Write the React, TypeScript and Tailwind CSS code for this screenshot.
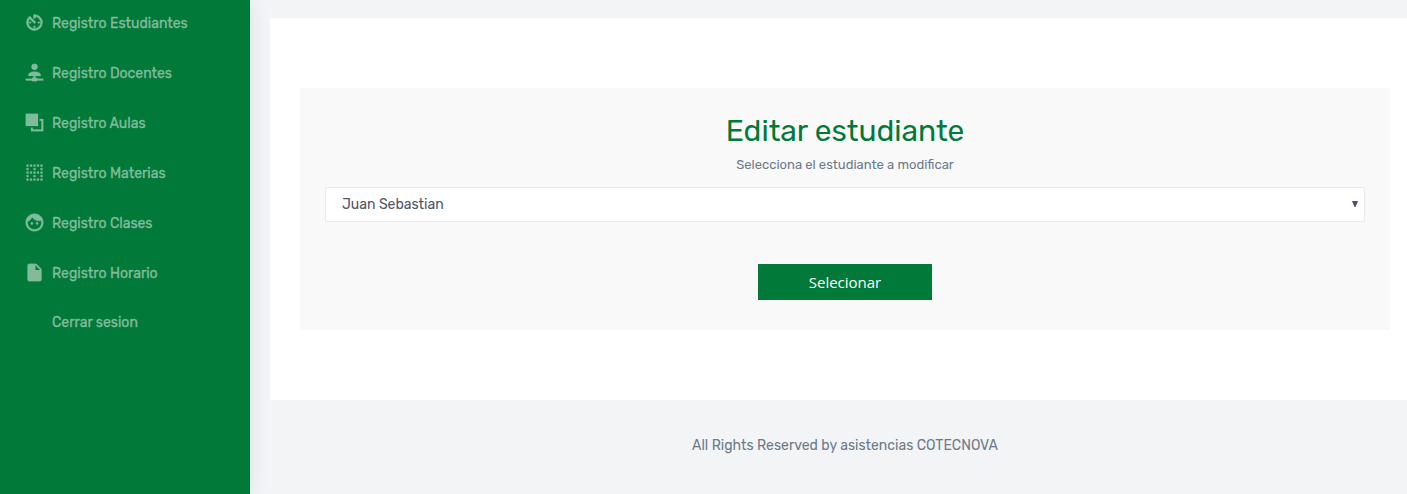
import React from "react";
import { MdAvTimer, MdFace, MdBorderClear } from "react-icons/md";

function PathIcon({ d }: { d: string }) {
  return (
    <svg viewBox="0 0 24 24" className="size-[21px]" fill="currentColor" stroke="currentColor" strokeWidth="0.3">
      <path d={d} />
    </svg>
  );
}

const network =
  "M13,16V18H14A1,1 0 0,1 15,19H22V21H15A1,1 0 0,1 14,22H10A1,1 0 0,1 9,21H2V19H9A1,1 0 0,1 10,18H11V16H5V14.5C5,12.57 8.13,11 12,11C15.87,11 19,12.57 19,14.5V16H13M12,2A3.5,3.5 0 0,1 15.5,5.5A3.5,3.5 0 0,1 12,9A3.5,3.5 0 0,1 8.5,5.5A3.5,3.5 0 0,1 12,2Z";
const forward = "M2,2H16V16H2V2M22,8V22H8V18H10V20H20V10H18V8H22Z";
const file =
  "M13,9V3.5L18.5,9M6,2C4.89,2 4,2.89 4,4V20A2,2 0 0,0 6,22H18A2,2 0 0,0 20,20V8L14,2H6Z";

const items = [
  {
    label: "Registro Estudiantes",
    icon: <MdAvTimer className="size-[21px] stroke-current stroke-[0.7] [&>path[fill=none]]:stroke-none" />,
  },
  { label: "Registro Docentes", icon: <PathIcon d={network} /> },
  { label: "Registro Aulas", icon: <PathIcon d={forward} /> },
  {
    label: "Registro Materias",
    icon: <MdBorderClear className="size-[21px] stroke-current stroke-[0.5] [&>path[fill=none]]:stroke-none" />,
  },
  {
    label: "Registro Clases",
    icon: <MdFace className="size-[21px] stroke-current stroke-[0.5] [&>path[fill=none]]:stroke-none" />,
  },
  { label: "Registro Horario", icon: <PathIcon d={file} /> },
  { label: "Cerrar sesion", icon: null },
];

export default function App() {
  return (
    <div className="flex h-[494px] w-full overflow-hidden bg-[#f2f4f6] font-['Rubik','Roboto',sans-serif] text-sm">
      <aside className="z-10 w-[250px] shrink-0 bg-[#017939] shadow-[1px_0_20px_rgba(0,0,0,0.08)]">
        <nav className="-mt-[3px] flex flex-col">
          {items.map(({ label, icon }) => (
            <a
              key={label}
              className={`flex items-center gap-[7px] pl-6 text-[#80bc9c] ${icon ? "h-[50px]" : "h-12"}`}
            >
              <span className="flex w-[21px] justify-center">{icon}</span>
              <span className="whitespace-nowrap pt-[3px] [-webkit-text-stroke:0.3px_currentColor]">{label}</span>
            </a>
          ))}
        </nav>
      </aside>
      <div className="flex min-w-0 grow flex-col pl-5 pt-[18px]">
        <main className="h-[382px] bg-white pl-[30px] pr-[17px] pt-[70px]">
          <section className="flex h-[242px] flex-col items-center bg-[#f9f9f9] px-[25px] pt-[25px]">
            <h1 className="text-[30px] leading-9 tracking-[-0.05px] text-[#017939]">Editar estudiante</h1>
            <p className="mt-[6px] text-[13px] leading-5 text-[#6c7a8a]">
              Selecciona el estudiante a modificar
            </p>
            <button className="mt-3 flex h-[35px] w-full items-center justify-between rounded-xs border border-[#e9e9e9] bg-white pl-4 pr-[6px] text-[#4f5467]">
              <span>Juan Sebastian</span>
              <svg viewBox="0 0 6 6" className="mb-px h-[6px] w-[6px]" fill="currentColor">
                <path d="M0 0H6L3.5 6H2.5Z" />
              </svg>
            </button>
            <button className="mt-[42px] h-9 w-[174px] bg-[#017939] pt-px font-['Open_Sans',sans-serif] text-[15px] text-white">
              Selecionar
            </button>
          </section>
        </main>
        <footer className="pl-[13px] pt-9 text-center leading-5 text-[#6c7a8a]">
          All Rights Reserved by asistencias COTECNOVA
        </footer>
      </div>
    </div>
  );
}
